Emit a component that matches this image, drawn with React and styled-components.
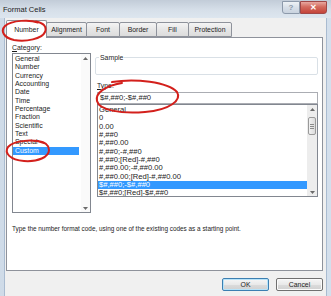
import styled, { createGlobalStyle } from "styled-components";

const GlobalStyle = createGlobalStyle`
  html, body { margin: 0; padding: 0; }
  body {
    width: 331px;
    height: 296px;
    overflow: hidden;
    background: #dbe5f0;
    font-family: "Liberation Sans", Arial, sans-serif;
    color: #1c1c1c;
  }
`;

const Window = styled.div`
  position: relative;
  width: 331px;
  height: 296px;
  display: flex;
  flex-direction: column;
  background: linear-gradient(90deg, #cfdbe8 0%, #dde6f0 40%, #d3dfec 100%);
  overflow: hidden;
`;

const TitleBar = styled.div`
  height: 18px;
  flex-shrink: 0;
  display: flex;
  align-items: flex-start;
  padding-left: 3px;
  background: linear-gradient(180deg, #c2ccd8 0%, #d6dfe9 55%, #dde6ef 100%);
`;

const Title = styled.span`
  flex: 1;
  font-size: 7.5px;
  line-height: 19px;
  color: #1a1a1a;
`;

const CaptionButtons = styled.div`
  display: flex;
  margin-top: 1px;
  margin-right: 4px;
`;

const CaptionButton = styled.div`
  width: ${(p) => p.$w}px;
  height: 13px;
  display: flex;
  align-items: center;
  justify-content: center;
  font-size: 8px;
  font-weight: bold;
  color: ${(p) => (p.$close ? "#ffffff" : "#8a98a8")};
  border: 1px solid ${(p) => (p.$close ? "#a04848" : "#8d9aab")};
  border-radius: ${(p) => (p.$close ? "0 0 3px 0" : "0 0 0 3px")};
  background: ${(p) =>
    p.$close
      ? "linear-gradient(180deg, #e8a8a0 0%, #d36a5e 45%, #c4443a 100%)"
      : "linear-gradient(180deg, #eef2f6 0%, #d7dfe8 50%, #c9d3df 100%)"};
  box-sizing: border-box;
`;

const Client = styled.div`
  flex: 1;
  display: flex;
  flex-direction: column;
  margin: 0 4px 0 4px;
  padding: 0 3px 0 0;
  background: #f0f0f0;
  border-left: 1px solid #a9bbd0;
  border-right: 1px solid #a9bbd0;
`;

const TabRow = styled.div`
  display: flex;
  align-items: flex-end;
  height: 17px;
  margin-top: 2px;
  position: relative;
  z-index: 1;
`;

const Tab = styled.div`
  width: ${(p) => p.$w}px;
  height: ${(p) => (p.$active ? 18 : 15)}px;
  margin-left: -1px;
  margin-bottom: ${(p) => (p.$active ? -1 : 0)}px;
  box-sizing: border-box;
  display: flex;
  align-items: center;
  justify-content: center;
  font-size: 6.9px;
  padding-bottom: ${(p) => (p.$active ? 1 : 0)}px;
  border: 1px solid #8e929b;
  border-bottom: ${(p) => (p.$active ? "none" : "1px solid #8e929b")};
  border-radius: 2px 2px 0 0;
  background: ${(p) =>
    p.$active ? "#ffffff" : "linear-gradient(180deg, #f4f4f4 0%, #e6e6e6 50%, #dcdcdc 100%)"};
  position: relative;
  z-index: ${(p) => (p.$active ? 2 : 1)};
  &:first-child { margin-left: 1px; }
`;

const Panel = styled.div`
  height: 234px;
  margin-left: 1px;
  box-sizing: border-box;
  background: #ffffff;
  border: 1px solid #8e929b;
  padding: 5px 4px 0 5px;
  display: flex;
  flex-direction: column;
`;

const PanelBody = styled.div`
  display: grid;
  grid-template-columns: 79px 1fr;
  column-gap: 4px;
`;

const Column = styled.div`
  display: flex;
  flex-direction: column;
  padding-top: ${(p) => p.$top || 0}px;
`;

const Label = styled.div`
  font-size: 6.9px;
  line-height: 9px;
  height: 9px;
  margin-top: ${(p) => p.$mt || 0}px;
  margin-left: ${(p) => p.$indent || 0}px;
  u { text-decoration: underline; text-underline-offset: 1px; }
`;

const ListBox = styled.div`
  height: ${(p) => p.$h}px;
  margin-top: ${(p) => p.$mt || 0}px;
  margin-left: ${(p) => p.$indent || 0}px;
  box-sizing: border-box;
  border: 1px solid #828790;
  display: flex;
  background: #ffffff;
`;

const Items = styled.div`
  flex: 1;
  padding-top: 1px;
  margin-right: ${(p) => p.$gap || 0}px;
  overflow: hidden;
`;

const Item = styled.div`
  height: 8.33px;
  line-height: 8.33px;
  font-size: ${(p) => p.$size}px;
  padding-left: ${(p) => p.$pad}px;
  white-space: nowrap;
  background: ${(p) => (p.$selected ? "#3399ff" : "transparent")};
  color: ${(p) => (p.$selected ? "#ffffff" : "#1c1c1c")};
`;

const Scrollbar = styled.div`
  width: ${(p) => p.$w}px;
  display: flex;
  flex-direction: column;
  align-items: center;
  justify-content: space-between;
  background: ${(p) => p.$track};
  padding: 3px 0 2px;
  box-sizing: border-box;
  position: relative;
`;

const Thumb = styled.div`
  position: absolute;
  left: 1px;
  right: 1px;
  top: 12px;
  height: 18px;
  box-sizing: border-box;
  border: 1px solid #9a9a9a;
  border-radius: 2px;
  background: linear-gradient(90deg, #f2f2f2, #dcdcdc);
  display: flex;
  flex-direction: column;
  align-items: center;
  justify-content: center;
  gap: 1px;
  span { width: 4px; height: 1px; background: #8a8a8a; }
`;

const Group = styled.fieldset`
  margin: 0;
  padding: 0 3px;
  height: 22px;
  box-sizing: border-box;
  border: 1px solid #d9e0e6;
  border-radius: 2px;
  min-inline-size: 0;
  legend {
    font-size: 6.9px;
    line-height: 9px;
    padding: 0 1px;
  }
`;

const TypeInput = styled.div`
  height: 12px;
  margin: 2px 0 0 2px;
  box-sizing: border-box;
  border: 1px solid #abadb3;
  padding-left: 2px;
  font-size: 7.6px;
  line-height: 10px;
  white-space: nowrap;
`;

const Hint = styled.div`
  margin-top: 11px;
  font-size: 6.4px;
  line-height: 9px;
  white-space: nowrap;
`;

const ButtonRow = styled.div`
  display: flex;
  justify-content: flex-end;
  gap: 7px;
  margin-top: 7px;
`;

const Button = styled.div`
  width: 47px;
  height: 13px;
  box-sizing: border-box;
  display: flex;
  align-items: center;
  justify-content: center;
  font-size: 6.9px;
  border: 1px solid ${(p) => (p.$default ? "#3c7fb1" : "#707070")};
  border-radius: 2px;
  background: linear-gradient(180deg, #f6f6f6 0%, #e9e9e9 50%, #dcdcdc 51%, #d0d0d0 100%);
  box-shadow: ${(p) => (p.$default ? "inset 0 0 0 1px #b6e3fa" : "inset 0 0 0 1px #fbfbfb")};
`;

const Marks = styled.svg`
  position: absolute;
  left: 0;
  top: 0;
  width: 331px;
  height: 296px;
  pointer-events: none;
  z-index: 5;
`;

const Arrow = ({ up }) => (
  <svg width="5" height="3" viewBox="0 0 5 3">
    <path d={up ? "M0 3 L2.5 0 L5 3 Z" : "M0 0 L2.5 3 L5 0 Z"} fill="#6b6b6b" />
  </svg>
);

const tabs = [
  ["Number", 41],
  ["Alignment", 41],
  ["Font", 34],
  ["Border", 38],
  ["Fill", 33],
  ["Protection", 44],
];

const categories = [
  "General", "Number", "Currency", "Accounting", "Date", "Time",
  "Percentage", "Fraction", "Scientific", "Text", "Special", "Custom",
];

const codes = [
  "General",
  "0",
  "0.00",
  "#,##0",
  "#,##0.00",
  "#,##0;-#,##0",
  "#,##0;[Red]-#,##0",
  "#,##0.00;-#,##0.00",
  "#,##0.00;[Red]-#,##0.00",
  "$#,##0;-$#,##0",
  "$#,##0;[Red]-$#,##0",
];

export default function App() {
  return (
    <Window>
      <GlobalStyle />
      <TitleBar>
        <Title>Format Cells</Title>
        <CaptionButtons>
          <CaptionButton $w={18}>?</CaptionButton>
          <CaptionButton $w={27} $close>✕</CaptionButton>
        </CaptionButtons>
      </TitleBar>

      <Client>
        <TabRow>
          {tabs.map(([name, w], i) => (
            <Tab key={name} $w={w} $active={i === 0}>{name}</Tab>
          ))}
        </TabRow>

        <Panel>
          <PanelBody>
            <Column>
              <Label><u>C</u>ategory:</Label>
              <ListBox $h={160} $mt={1}>
                <Items $gap={2}>
                  {categories.map((c) => (
                    <Item key={c} $size={6.9} $pad={2} $selected={c === "Custom"}>{c}</Item>
                  ))}
                </Items>
                <Scrollbar $w={9} $track="#fafafa">
                  <Arrow up />
                  <Arrow />
                </Scrollbar>
              </ListBox>
            </Column>

            <Column $top={10}>
              <Group>
                <legend>Sample</legend>
              </Group>
              <Label $indent={2} $mt={6}><u>T</u>ype:</Label>
              <TypeInput>$#,##0;-$#,##0</TypeInput>
              <ListBox $h={93} $indent={2}>
                <Items>
                  {codes.map((c, i) => (
                    <Item key={c} $size={7.6} $pad={1} $selected={i === 9}>{c}</Item>
                  ))}
                </Items>
                <Scrollbar $w={10} $track="#ededed">
                  <Arrow up />
                  <Thumb><span /><span /><span /></Thumb>
                  <Arrow />
                </Scrollbar>
              </ListBox>
            </Column>
          </PanelBody>

          <Hint>Type the number format code, using one of the existing codes as a starting point.</Hint>
        </Panel>

        <ButtonRow>
          <Button $default>OK</Button>
          <Button>Cancel</Button>
        </ButtonRow>
      </Client>

      <Marks viewBox="0 0 331 296">
        <g fill="none" stroke="#d3201c" strokeWidth="2" strokeLinecap="round">
          <path d="M38 22.5 C30 19.5, 12 20, 5 26 C0 31, 4 38, 14 40 C26 42, 42 39, 45 32 C47 27, 44 23, 36 21.5" />
          <path d="M44 143 C34 139, 14 140, 8 147 C4 153, 10 160, 24 161 C38 162, 49 157, 49 150 C49 145, 45 142, 38 141" />
          <path d="M112 82 C135 78, 168 82, 177 92 C182 100, 170 110, 145 112 C120 114, 99 110, 97 101 C95 93, 105 86, 122 83" />
        </g>
      </Marks>
    </Window>
  );
}
